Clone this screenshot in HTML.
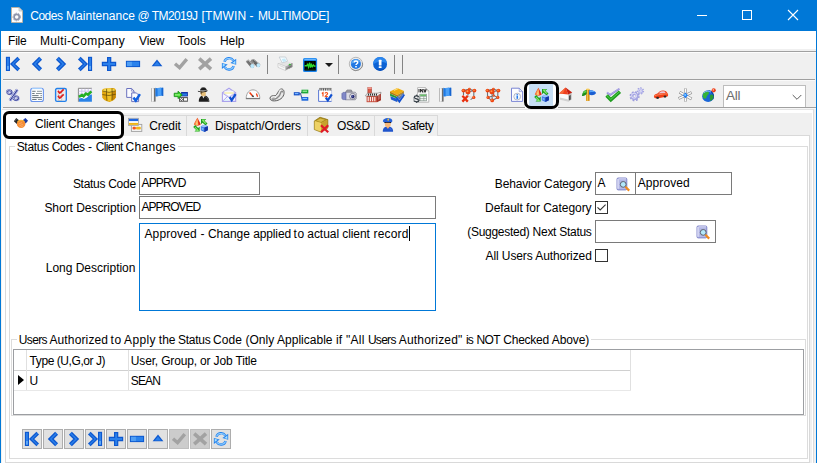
<!DOCTYPE html>
<html><head><meta charset="utf-8"><title>Codes Maintenance</title>
<style>
html,body{margin:0;padding:0;background:#f0f0f0;}
body{width:817px;height:463px;overflow:hidden;font-family:"Liberation Sans",sans-serif;}
#win{position:relative;width:817px;height:463px;overflow:hidden;background:#f0f0f0;}
#win div,#win span{position:absolute;box-sizing:border-box;}
#win svg{display:block;}
.t{white-space:pre;font-size:12px;}
.ic{width:16px;height:16px;}
.ic svg,.nb svg{display:block;width:16px;height:16px;overflow:visible;}
.sep{top:55px;width:1px;height:19px;background:#848484;}
.inp{background:#fff;border:1px solid #7a7a7a;}
.cb{width:13px;height:13px;background:#fff;border:1px solid #333;}
.tab{top:115px;height:21px;background:#f0f0f0;border:1px solid #d9d9d9;border-bottom:none;}
.nb{top:429px;width:20px;height:20px;background:#e1e1e1;border:1px solid #adadad;}
.nb svg{position:absolute;left:1px;top:1px;}
.nbd{background:#cccccc;border-color:#bfbfbf;}
.gl{background:#dcdcdc;}
</style></head>
<body>
<div id="win">
<!-- window chrome -->
<div style="left:0;top:0;width:817px;height:31px;background:#0078d7"></div>
<div style="left:0;top:0;width:1px;height:463px;background:#0078d7"></div>
<div style="left:816px;top:0;width:1px;height:463px;background:#0078d7"></div>
<!-- app icon -->
<div style="left:11px;top:7px;width:12px;height:16px"><svg width="12" height="16" viewBox="0 0 12 16"><path d="M0.5 0.5H8L11.5 4V15.5H0.5Z" fill="#fdfdfd" stroke="#b9b3a8" stroke-width="1"/><path d="M8 0.5V4H11.5Z" fill="#dfe6f2" stroke="#b9b3a8" stroke-width=".6"/><circle cx="5.7" cy="10" r="2.6" fill="none" stroke="#8e94aa" stroke-width="1.7"/><circle cx="5.7" cy="10" r="3.8" fill="none" stroke="#9aa0b4" stroke-width="1" stroke-dasharray="1.5 1.2"/></svg></div>
<!-- caption buttons -->
<div style="left:697px;top:15px;width:10px;height:1px;background:#fff"></div>
<div style="left:742px;top:10px;width:10px;height:10px;border:1px solid #fff"></div>
<div style="left:787px;top:9px;width:12px;height:12px"><svg width="12" height="12" viewBox="0 0 12 12"><path d="M1 1L11 11M11 1L1 11" stroke="#fff" stroke-width="1.1" fill="none"/></svg></div>
<!-- menu bar -->
<div style="left:1px;top:31px;width:815px;height:18px;background:#fff"></div>
<div style="left:1px;top:51px;width:815px;height:1px;background:#a0a0a0"></div>
<div style="left:1px;top:52px;width:815px;height:1px;background:#fcfcfc"></div>
<!-- toolbar 1 -->
<div style="left:3px;top:79px;width:812px;height:1px;background:#a0a0a0"></div>
<div style="left:3px;top:80px;width:812px;height:1px;background:#fafafa"></div>
<div class="ic" style="left:5px;top:56px"><svg viewBox="0 0 16 16" ><rect x="0.9" y="0.8" width="4.1" height="14.2" fill="#0e58cf"/><rect x="2.0" y="1.9" width="1.9" height="12" fill="#2b80ea"/><rect x="2.2" y="10" width="1.5" height="3.6" fill="#6db4fa"/><path d="M13.7 2.2 L7.7 8 L13.7 13.8" fill="none" stroke="#0e58cf" stroke-width="3.8"/><path d="M13.7 2.2 L7.7 8 L13.7 13.8" fill="none" stroke="#2b80ea" stroke-width="1.1"/></svg></div>
<div class="ic" style="left:29px;top:56px"><svg viewBox="0 0 16 16" ><path d="M11.6 2.3 L5.8 8 L11.6 13.7" fill="none" stroke="#0e58cf" stroke-width="4.2"/><path d="M11.6 2.3 L5.8 8 L11.6 13.7" fill="none" stroke="#2b80ea" stroke-width="1.5"/></svg></div>
<div class="ic" style="left:53px;top:56px"><svg viewBox="0 0 16 16" ><path d="M4.4 2.3 L10.2 8 L4.4 13.7" fill="none" stroke="#0e58cf" stroke-width="4.2"/><path d="M4.4 2.3 L10.2 8 L4.4 13.7" fill="none" stroke="#2b80ea" stroke-width="1.5"/></svg></div>
<div class="ic" style="left:77px;top:56px"><svg viewBox="0 0 16 16" ><rect x="11" y="0.8" width="4.1" height="14.2" fill="#0e58cf"/><rect x="12.1" y="1.9" width="1.9" height="12" fill="#2b80ea"/><rect x="12.3" y="10" width="1.5" height="3.6" fill="#6db4fa"/><path d="M2.3 2.2 L8.3 8 L2.3 13.8" fill="none" stroke="#0e58cf" stroke-width="3.8"/><path d="M2.3 2.2 L8.3 8 L2.3 13.8" fill="none" stroke="#2b80ea" stroke-width="1.1"/></svg></div>
<div class="ic" style="left:101px;top:56px"><svg viewBox="0 0 16 16" ><path d="M6 1H10.3V5.7H15.2V10.2H10.3V15.1H6V10.2H0.8V5.7H6Z" fill="#0e58cf"/><path d="M7.2 2.2H9.1V6.9H14V9H9.1V13.9H7.2V9H2V6.9H7.2Z" fill="#2b80ea"/></svg></div>
<div class="ic" style="left:125px;top:56px"><svg viewBox="0 0 16 16" ><rect x="0.9" y="4.8" width="14.2" height="6.3" fill="#0e58cf"/><rect x="1.9" y="5.8" width="12.2" height="4.3" fill="#2a82ec"/><rect x="1.9" y="5.8" width="5" height="4.3" fill="#4f9ef4"/></svg></div>
<div class="ic" style="left:149px;top:56px"><svg viewBox="0 0 16 16" ><path d="M8 3.6L13.4 10.3H2.6Z" fill="#0e58cf"/><path d="M8 5.6L11.2 9.4H4.8Z" fill="#2b80ea"/></svg></div>
<div class="ic" style="left:173px;top:56px"><svg viewBox="0 0 16 16" ><path d="M2 7.7L6.6 11.7L13.8 3.2" fill="none" stroke="#a2a2a2" stroke-width="3.4"/></svg></div>
<div class="ic" style="left:197px;top:56px"><svg viewBox="0 0 16 16" ><path d="M2.2 2.6L14 13.1M14 2.6L2.2 13.1" fill="none" stroke="#a2a2a2" stroke-width="3.6"/></svg></div>
<div class="ic" style="left:221px;top:56px"><svg viewBox="0 0 16 16" ><path d="M3.5 5.8C4.4 1.6 10 .8 12.4 4.6" fill="none" stroke="#2482ee" stroke-width="2.4"/><path d="M3.6 5.4C4.6 2 9.8 1.4 12.2 4.4" fill="none" stroke="#92d0ff" stroke-width="1.1"/><path d="M9.4 7.1L15.2 2.7V8.7Z" fill="#2482ee"/><path d="M11.4 6.9L14.4 4.6V7.9Z" fill="#a6e0ff"/><g transform="rotate(180 8.05 7.85)"><path d="M3.5 5.8C4.4 1.6 10 .8 12.4 4.6" fill="none" stroke="#2482ee" stroke-width="2.4"/><path d="M3.6 5.4C4.6 2 9.8 1.4 12.2 4.4" fill="none" stroke="#92d0ff" stroke-width="1.1"/><path d="M9.4 7.1L15.2 2.7V8.7Z" fill="#2482ee"/><path d="M11.4 6.9L14.4 4.6V7.9Z" fill="#a6e0ff"/></g></svg></div>
<div class="ic" style="left:245px;top:56px"><svg viewBox="0 0 16 16" ><path d="M.8 5.6L3.2 3.6L9.4 9.4L8.6 11.8L5.8 11.4Z" fill="#727272"/><path d="M5.6 4.2L8.6 2.9L15.2 8.2L14.9 10.8L12 11Z" fill="#646464"/><path d="M4.6 5.4L7 4.4L9.6 6.8L7.6 7.8Z" fill="#8a8a8a"/><path d="M1.4 5.4L3.2 4.2L7.6 8.2M6.4 4.2L8.6 3.5L13.6 7.4" stroke="#b4b4b4" stroke-width="1" fill="none"/><ellipse cx="7.3" cy="10" rx="1.9" ry="2.1" fill="#bce8fc" transform="rotate(-30 7.5 10.1)"/><ellipse cx="13.4" cy="9.2" rx="1.8" ry="2.1" fill="#bce8fc" transform="rotate(-30 13.5 9.3)"/></svg></div>
<div class="sep" style="left:267px"></div>
<div class="sep" style="left:338px"></div>
<div class="sep" style="left:394px"></div>
<div class="sep" style="left:402px"></div>
<div class="ic" style="left:277px;top:56px"><svg viewBox="0 0 16 16" ><path d="M1 7.4L7.4 4.4L15.4 7L8.6 10.4Z" fill="#e4e4e4"/><path d="M1 7.4L8.6 10.4V14.6L1 11.4Z" fill="#f7f7f7" stroke="#b4b4b4" stroke-width=".5"/><path d="M8.6 10.4L15.4 7V11L8.6 14.6Z" fill="#a8a8a8"/><path d="M11.6 8.9L15.4 7V11L11.6 13Z" fill="#8c8c8c"/><path d="M2.2 1H8.6L10.6 5.2L5.2 6.8Z" fill="#f6fcff" stroke="#b4bcc4" stroke-width=".6"/><path d="M4.8 3L8 2.6L9.4 5L6 6Z" fill="#c4eaf8"/><path d="M2.4 9.4L7.4 11.6" stroke="#d0d0d0" stroke-width=".8"/><path d="M9.6 12.6L14.6 10" stroke="#6e6e6e" stroke-width=".9"/><ellipse cx="12.8" cy="8.5" rx="1.1" ry=".7" fill="#2ec42e"/></svg></div>
<div class="ic" style="left:302px;top:56px"><svg viewBox="0 0 16 16" ><rect x="1" y="2" width="14.1" height="14.1" rx="1.6" fill="#1c86f0"/><rect x="2.4" y="2.8" width="11.4" height="1" fill="#7cc0ff"/><rect x="2.4" y="5" width="11.4" height="9.6" fill="#000"/><path d="M2.6 13.6H13.6M5 5.2V14.4M11 5.2V14.4" stroke="#0c3a0c" stroke-width=".6"/><path d="M2.6 9.8H4.6L5.6 8.4L6.6 11L7.6 6.6L8.6 11.6L9.4 8.6L10.4 10.6L11.4 9L12.4 10.2L13.6 9.8" fill="none" stroke="#2edc2e" stroke-width="1.4"/></svg></div>
<div style="position:absolute;left:324.5px;top:63px;width:0;height:0;border-left:4px solid transparent;border-right:4px solid transparent;border-top:4.5px solid #1a1a1a"></div>
<div class="ic" style="left:348px;top:56px"><svg viewBox="0 0 16 16" ><circle cx="7.9" cy="7.9" r="6.6" fill="#ececec" stroke="#a8a8a8" stroke-width=".8"/><path d="M3.4 12.8A6.6 6.6 0 0 0 14.4 6.6" fill="none" stroke="#7e7e7e" stroke-width=".8"/><circle cx="7.9" cy="7.9" r="5" fill="#2278e2"/><path d="M7.9 3.3A4.6 4.6 0 0 0 3.4 8.6C5 6 9 4.6 12.2 6.2A4.6 4.6 0 0 0 7.9 3.3Z" fill="#5aaaf6"/><path d="M6.2 6.6C6.2 4.6 9.7 4.6 9.7 6.5C9.7 7.7 8 7.8 8 9.1" fill="none" stroke="#fff" stroke-width="1.5"/><rect x="7.2" y="10" width="1.6" height="1.4" fill="#fff"/></svg></div>
<div class="ic" style="left:372px;top:56px"><svg viewBox="0 0 16 16" ><circle cx="8.1" cy="7.9" r="7" fill="#0c62d4"/><path d="M8.1 .9A7 7 0 0 0 1.2 8.6C4 5 12 4.6 15 8A7 7 0 0 0 8.1 .9Z" fill="#2a86ee"/><path d="M2.6 12A7 7 0 0 0 13.6 12C10 14 6 14 2.6 12Z" fill="#0848b0"/><rect x="6.8" y="3.8" width="2.7" height="5.6" rx=".5" fill="#fff"/><rect x="6.7" y="10.2" width="2.9" height="1.8" rx=".5" fill="#fff"/></svg></div>
<!-- toolbar 2 -->
<div style="left:3px;top:107px;width:813px;height:1px;background:#a0a0a0"></div>
<div style="left:1px;top:108px;width:815px;height:1px;background:#f7f7f7"></div>
<div style="left:525px;top:82px;width:33px;height:26px;background:#fff"></div>
<div style="left:529px;top:84px;width:24px;height:22px;background:#c7dff5"></div>
<div class="ic" style="left:5px;top:87px"><svg viewBox="0 0 16 16" ><g stroke="#a6aee6" fill="none" transform="translate(.8,.6)"><ellipse cx="4.2" cy="5" rx="2.2" ry="1.8" stroke-width="1.8"/><ellipse cx="10.7" cy="10.9" rx="2.3" ry="1.9" stroke-width="1.8"/><path d="M12 2.4L4.6 13.2" stroke-width="2.2"/></g><g stroke="#363e90" fill="none"><ellipse cx="4.2" cy="5" rx="2.2" ry="1.8" stroke-width="1.7"/><ellipse cx="10.7" cy="10.9" rx="2.3" ry="1.9" stroke-width="1.7"/><path d="M12 2.4L4.6 13.2" stroke-width="2"/></g><g stroke="#ccd2f8" fill="none" transform="translate(-.3,-.3)"><ellipse cx="4.2" cy="5" rx="2.2" ry="1.8" stroke-width=".8"/><ellipse cx="10.7" cy="10.9" rx="2.3" ry="1.9" stroke-width=".8"/><path d="M12 2.4L4.6 13.2" stroke-width="1"/></g></svg></div>
<div class="ic" style="left:29px;top:87px"><svg viewBox="0 0 16 16" ><rect x="1.7" y="1.4" width="12.7" height="13.1" rx="2" fill="#fcfeff" stroke="#6a94ea" stroke-width="1.1"/><path d="M3 1.6H13" stroke="#a8d4ff" stroke-width="1"/><path d="M3.2 4.3H6.6M3.2 6.5H5.6M3.2 8.6H9.6M3.2 10.6H13M3.2 12.5H7.6" stroke="#6c7880" stroke-width="1"/><path d="M8 4.3H13M7 6.5H13M11.4 8.6H13M9 12.5H13" stroke="#8c969c" stroke-width="1"/></svg></div>
<div class="ic" style="left:53px;top:87px"><svg viewBox="0 0 16 16" ><rect x="2.6" y="1.5" width="10.7" height="12.9" rx="1.4" fill="#ececee" stroke="#2280ea" stroke-width="1.4"/><rect x="5.2" y="5.6" width="3.6" height="2.6" fill="#fff" stroke="#a8a8a8" stroke-width=".6"/><rect x="5.2" y="10.6" width="3.6" height="2.6" fill="#fff" stroke="#a8a8a8" stroke-width=".6"/><path d="M4.9 3.9L6.8 6L10.7 2.4M4.9 8.9L6.8 11L10.7 7.4" fill="none" stroke="#e01a1a" stroke-width="1.6"/></svg></div>
<div class="ic" style="left:77px;top:87px"><svg viewBox="0 0 16 16" ><rect x="1.4" y="1.3" width="13.5" height="13.5" fill="#fbfbff"/><path d="M1.4 14.8V1.3H14.9" fill="none" stroke="#8a8a8a" stroke-width="1"/><path d="M4.8 1.6V9M8 1.6V9M11.2 1.6V9M14.4 1.6V6M1.6 4.2H14.8M1.6 7H14.8" stroke="#c4bce8" stroke-width=".8"/><path d="M1.9 11.6L5 11L7 12L10 10.4L12.6 8L14.9 7.6V14.8H1.9Z" fill="#2a82e6"/><path d="M1.9 9.8L5 8L6.6 9.2L9 6.6L11 7.6L14.4 4.4" fill="none" stroke="#24b024" stroke-width="2.6"/></svg></div>
<div class="ic" style="left:101px;top:87px"><svg viewBox="0 0 16 16" ><path d="M1 4Q1 1.8 4 1.5L12 1.1Q15 1.5 15 4L14.7 10.4Q14 13 8.6 14.9Q2.6 13.6 1.3 10.4Z" fill="#e4a80e"/><path d="M1.2 3.6Q4 1.2 8 1.6Q12 1 14.8 3.4Q12 5.6 8 5.4Q4 5.8 1.2 3.6Z" fill="#f6d648"/><path d="M6 5.6Q8.4 5 10.8 5.6V13.4Q8.4 14.6 6 13.6Z" fill="#f0c024"/><path d="M11 5.6L14.9 3.6L14.7 10.4Q13.6 12.4 11 13.6Z" fill="#c68808"/><path d="M5.6 1.8Q5.2 8 6 13.8M11 1.4Q11.4 8 10.9 13.4M1.3 7.6Q8 9.6 14.8 7.2M1.6 4Q8 6.8 14.6 3.8" fill="none" stroke="#5e4606" stroke-width=".7"/></svg></div>
<div class="ic" style="left:125px;top:87px"><svg viewBox="0 0 16 16" ><path d="M1.7 1.5H6.6L9 3.9V10.4H1.7Z" fill="#fbfcff" stroke="#6a72be" stroke-width="1"/><path d="M6.4 1.5V4.1H9" fill="none" stroke="#6a72be" stroke-width=".7"/><path d="M6.7 5.9H11.4L13.6 8.1V14.6H6.7Z" fill="#fbfcff" stroke="#6a72be" stroke-width="1"/><path d="M8.4 10.6L10.8 13.6L14.9 7.1" fill="none" stroke="#1060e0" stroke-width="2.5"/></svg></div>
<div class="ic" style="left:149px;top:87px"><svg viewBox="0 0 16 16" ><rect x="2.4" y="1.2" width="4.2" height="13.4" fill="#6e6e6e"/><rect x="2.6" y="1.2" width="2.4" height="13.4" fill="#e2e2e2"/><rect x="3.2" y="1.2" width=".9" height="13.4" fill="#fafafa"/><path d="M6.4 .8C8.6 1.8 11 .2 14.2 .8V9C11 8.2 8.6 10 6.4 9.2Z" fill="#1f7ae4"/><path d="M8.6 1C10 .8 11 .6 12.2 .6V8.6C11 8.6 10 8.8 8.6 9.2Z" fill="#4aa0f8"/><path d="M13.2 .7L14.2 .8V9L13.2 8.8Z" fill="#1460c8"/></svg></div>
<div class="ic" style="left:173px;top:87px"><svg viewBox="0 0 16 16" ><rect x="8.1" y="5" width="6.8" height="4.4" fill="#1434a8"/><rect x="9" y="6.4" width="5" height="2.2" fill="#2a7ce4"/><rect x="6" y="10" width="8.9" height="4.8" fill="#5e5e5e"/><rect x="11" y="11.2" width="3" height="2.4" fill="#fff"/><path d="M7.2 11.2L9.8 13.6M9.8 11.2L7.2 13.6" stroke="#fff" stroke-width="1"/><path d="M1.2 6.2H5V4.2L9.3 7.9L5 11.6V9.6H1.2Z" fill="#34d424" stroke="#148a14" stroke-width=".8"/><path d="M2 7.9H7" stroke="#a0f488" stroke-width="1.2"/></svg></div>
<div class="ic" style="left:197px;top:87px"><svg viewBox="0 0 16 16" ><path d="M1.8 14.8C1.6 11 3.4 8.6 6.4 8.2C10 8.2 12.4 11 12.4 14.8Z" fill="#1e1e1e"/><path d="M8 9.4C10 10 11.4 12 11.6 14" fill="none" stroke="#5a5a5a" stroke-width=".8"/><path d="M3.8 4.6H8.8V7.4C8.8 9 7.4 9.4 6.4 9.4C5 9.4 3.8 8.6 3.8 7Z" fill="#e8c07a"/><path d="M3.6 4.6H4.8V7.6L3.6 7Z" fill="#7a5a2a"/><path d="M5.4 9.2L6.4 11.6L7.6 9Z" fill="#f4f4f4"/><path d="M3 3.6C3 -.6 9.8 -.6 9.8 3.6Z" fill="#1c1c1c"/><path d="M.9 3.8C3 4.8 8 4.8 10.4 3.2L10.6 4C8 5.8 3 5.8 .9 4.6Z" fill="#141414"/><path d="M4 1.4C5 .4 7.4 .2 8.6 1.2" stroke="#5a5a5a" stroke-width=".7" fill="none"/></svg></div>
<div class="ic" style="left:221px;top:87px"><svg viewBox="0 0 16 16" ><path d="M1.4 5.8L8 1.2L14.7 5.8V14.4H1.4Z" fill="#f6f6ff" stroke="#aaa2ec" stroke-width="1.1"/><path d="M3.2 6.4V3.8H12.8V6.4L8 9.6Z" fill="#fff" stroke="#c0bce0" stroke-width=".5"/><path d="M3.4 6H12.6" stroke="#f4ec9a" stroke-width="1.2"/><path d="M1.4 6L8 10.6L14.7 6M1.6 14.2L6.4 9.6" fill="none" stroke="#aaa2ec" stroke-width=".9"/><path d="M2.4 13.6L7 11.6V14Z" fill="#d8f0fa"/><path d="M8.7 10.2L10.7 13.2L14.6 7.2" fill="none" stroke="#1050d0" stroke-width="2.3"/></svg></div>
<div class="ic" style="left:245px;top:87px"><svg viewBox="0 0 16 16" ><path d="M1.2 11.4C1.2 0 14.8 0 14.8 11.4Z" fill="#fdfdfd" stroke="#a2a2a2" stroke-width="1"/><path d="M.9 11.7H15" stroke="#6e6e6e" stroke-width="1"/><path d="M4.6 5.4L7.4 8.8" stroke="#f03a10" stroke-width="1.5"/><path d="M7.2 8.6L8.6 9.8" stroke="#2a2a2a" stroke-width="1.5"/><path d="M11.4 6.6L12.6 9.8" stroke="#f03a10" stroke-width="1.3"/></svg></div>
<div class="ic" style="left:269px;top:87px"><svg viewBox="0 0 16 16" ><path d="M1 11.2C1 9 3.8 8.4 6.2 8.8C8.6 7.6 9 3.2 11.8 2C14.8 1.6 15.6 4.6 14.8 7.6C13.6 12 8.4 14.4 3.8 13.8C1.8 13.4 1 12.4 1 11.2Z" fill="#e8e8e8" stroke="#5a5a5a" stroke-width="1"/><path d="M2.4 12C5.6 13 10.6 11 12 5C12.4 3.6 13.8 3.8 13.8 5.4" fill="none" stroke="#8a8a8a" stroke-width="1.3"/><path d="M2.6 10.4C4 9.6 6 9.8 7 10.4" fill="none" stroke="#fff" stroke-width="1"/><ellipse cx="4.6" cy="11.4" rx="1.8" ry=".9" fill="#a8a8a8"/><path d="M10 4.4C10.8 3 12 2.8 12.6 3" stroke="#fff" stroke-width=".9" fill="none"/></svg></div>
<div class="ic" style="left:293px;top:87px"><svg viewBox="0 0 16 16" ><path d="M5.6 6.8H7.6M7.6 6.8L9 4.6M7.6 6.8L9 11.8" stroke="#3a4a9a" stroke-width="1" fill="none"/><rect x=".8" y="5.2" width="5.9" height="3.2" fill="#1650c8"/><rect x="1.8" y="6" width="3.6" height="1.2" fill="#7ab8ff"/><rect x="8.5" y="2.7" width="6.8" height="3.7" fill="#1fa838"/><rect x="9.6" y="3.6" width="4.4" height="1.2" fill="#a0f0a0"/><rect x="8.5" y="10" width="6.8" height="3.7" fill="#1a64dc"/><rect x="9.6" y="10.9" width="4.4" height="1.2" fill="#8ac4ff"/></svg></div>
<div class="ic" style="left:317px;top:87px"><svg viewBox="0 0 16 16" ><path d="M1.6 3H14.6V14.4H1.6Z" fill="#fff"/><path d="M1.6 2.8V14.4H14.6" fill="none" stroke="#5a78d4" stroke-width="1"/><path d="M14.6 3V14.4" stroke="#b8c0e0" stroke-width=".8"/><path d="M3 1.2V3.6M4.8 1.2V3.6M6.6 1.2V3.6M8.4 1.2V3.6M10.2 1.2V3.6M12 1.2V3.6M13.8 1.2V3.6" stroke="#3a3a3a" stroke-width=".9"/><path d="M2.4 1.4H14.4" stroke="#6a6a6a" stroke-width=".6"/><path d="M4.8 6.4L6 5.6V9.6M8.2 6.4C8.2 5.2 10.6 5.2 10.6 6.6C10.6 7.6 8.4 8.6 8.2 9.6H10.8" fill="none" stroke="#f4501a" stroke-width="1.2"/><path d="M8.8 10.6L10.8 13.4L14.8 7.4" fill="none" stroke="#1050d0" stroke-width="2.2"/></svg></div>
<div class="ic" style="left:341px;top:87px"><svg viewBox="0 0 16 16" ><path d="M4.6 5.4L6 3H10.4L11.4 5.4Z" fill="#a4a4ac" stroke="#6a6a74" stroke-width=".6"/><path d="M4.4 5.2H14.2L15.2 6.2V11.8L14.2 12.8H4.4Z" fill="#dcdce4" stroke="#7a7a88" stroke-width=".7"/><path d="M.9 6.6L2 5.4H5V12.6H2L.9 11.6Z" fill="#8088c8" stroke="#5a62a0" stroke-width=".6"/><circle cx="11.6" cy="9.4" r="3" fill="#eeeef4" stroke="#6a6a7a" stroke-width=".8"/><circle cx="11.8" cy="9.6" r="1.8" fill="#262870"/><circle cx="11.2" cy="9" r=".6" fill="#9ab8ff"/></svg></div>
<div class="ic" style="left:365px;top:87px"><svg viewBox="0 0 16 16" ><rect x="2.9" y=".4" width="3.5" height="7" fill="#dc5a48" stroke="#9a3024" stroke-width=".6"/><rect x="2.7" y=".3" width="3.9" height="1.5" fill="#f6a69c"/><path d="M12 6.4L16 5.6V13.2L12 15.2Z" fill="#a03024"/><path d="M1.6 9H12V15.2H1.6Z" fill="#c64c3c"/><path d="M.4 8.8L2.4 6.2H12.4L16 5.2V6.6L12.2 9H.4Z" fill="#f6f6f6" stroke="#6a6a6a" stroke-width=".5"/><path d="M3.4 6.6V8.6M5.4 6.6V8.6M7.4 6.6V8.6M9.4 6.6V8.6M11.4 6.6V8.6" stroke="#1a1a1a" stroke-width="1"/><path d="M3.2 10V14.2M5.4 10V14.2M7.6 10V14.2M9.8 10V14.2" stroke="#fbeae6" stroke-width="1.2"/><path d="M13.4 8V12.8M14.8 7.4V12.2" stroke="#d88a80" stroke-width=".7"/></svg></div>
<div class="ic" style="left:389px;top:87px"><svg viewBox="0 0 16 16" ><path d="M1 4.6L8.2 1L15 4L8 8Z" fill="#f0ae10"/><path d="M5 3.4L9 1.6" stroke="#fff0b0" stroke-width=".8"/><path d="M1 4.6L8 8V9.6L1 6.4Z" fill="#b87a08"/><path d="M8 8L15 4V5.6L8 9.6Z" fill="#c88c0c"/><path d="M1 6.6L8 9.8V11.6L1.2 9Z" fill="#22983a"/><path d="M8 9.8L15 5.8V7.4L8 11.6Z" fill="#a8aca0"/><path d="M1.4 9.2L8 11.8V15L2 12.6Z" fill="#1f5cd0"/><path d="M8 11.8L14.6 7.8V10.6L8 15Z" fill="#8e929e"/><path d="M8 9.8L15 5.8M8 11.8L14.6 7.8" stroke="#4a4a4a" stroke-width=".6"/><path d="M7.8 10.2L10.4 14L15 7.4" fill="none" stroke="#1050d0" stroke-width="2.5"/><path d="M8.4 10L10.4 13L14.4 7.2" fill="none" stroke="#fff" stroke-width=".5" opacity=".6"/></svg></div>
<div class="ic" style="left:413px;top:87px"><svg viewBox="0 0 16 16" ><path d="M4.6 .6H12.4L15.8 4V15.2H4.6Z" fill="#fff" stroke="#a8a8a8" stroke-width=".8"/><path d="M12.4 .6V4H15.8Z" fill="#e4e4e4" stroke="#a8a8a8" stroke-width=".5"/><path d="M6 2V5.4M7.6 5.4V2L9.8 5.4V2M10.8 2L12 5.4L13.2 2" fill="none" stroke="#1e1e1e" stroke-width="1"/><rect x="6.8" y="7.2" width="6.6" height="6.6" fill="#f4faf4" stroke="#7a8a84" stroke-width=".7"/><rect x="7.2" y="7.5" width="5.8" height="1.6" fill="#6ac06a"/><path d="M6.8 9.4H13.4M6.8 11.6H13.4M10.8 9.4V13.8" stroke="#7a8a84" stroke-width=".6"/><path d="M5.8 9.8C5 8.6 1.3 8.4 1.3 10.3C1.3 12.1 5.9 11.5 5.9 13.5C5.9 15.3 2 15.1 .9 13.9" fill="none" stroke="#323c44" stroke-width="1.2"/><path d="M3.6 7.6V9M3.6 14.6V16" stroke="#323c44" stroke-width=".9"/><path d="M0 11H2M5 11H7.4M0 13H2.4M5.4 13H7.4" stroke="#59636b" stroke-width=".7"/></svg></div>
<div class="ic" style="left:437px;top:87px"><svg viewBox="0 0 16 16" ><rect x="2.4" y="1.2" width="4.2" height="13.4" fill="#6e6e6e"/><rect x="2.6" y="1.2" width="2.4" height="13.4" fill="#e2e2e2"/><rect x="3.2" y="1.2" width=".9" height="13.4" fill="#fafafa"/><path d="M6.4 .8C8.6 1.8 11 .2 14.2 .8V9C11 8.2 8.6 10 6.4 9.2Z" fill="#1f7ae4"/><path d="M8.6 1C10 .8 11 .6 12.2 .6V8.6C11 8.6 10 8.8 8.6 9.2Z" fill="#4aa0f8"/><path d="M13.2 .7L14.2 .8V9L13.2 8.8Z" fill="#1460c8"/></svg></div>
<div class="ic" style="left:461px;top:87px"><svg viewBox="0 0 16 16" ><path d="M2.5 3.6V8M12.8 10.4V3.6L8.4 2.1L2.5 3.6L7 4.8L13.4 3.6M7 4.8V8.4M12.8 10.4L9.6 12.6" fill="none" stroke="#6c727a" stroke-width="1.1"/><path d="M7.6 9.6L12.4 10.6" stroke="#e8a080" stroke-width=".8" stroke-dasharray="1 1"/><circle cx="8.4" cy="2.1" r="1.38" fill="#ee4210"/><circle cx="8.10" cy="1.80" r="0.54" fill="#ff9a4a"/><circle cx="2.5" cy="3.6" r="1.95" fill="#ee4210"/><circle cx="2.08" cy="3.18" r="0.77" fill="#ff9a4a"/><circle cx="13.4" cy="3.6" r="1.95" fill="#ee4210"/><circle cx="12.97" cy="3.18" r="0.77" fill="#ff9a4a"/><circle cx="12.8" cy="10.4" r="1.61" fill="#ee4210"/><circle cx="12.45" cy="10.05" r="0.63" fill="#ff9a4a"/><circle cx="7" cy="4.8" r="2.53" fill="#ee4210"/><circle cx="6.45" cy="4.25" r="0.99" fill="#ff9a4a"/><path d="M1.4 8.8L6.8 14.6M6.8 8.8L1.4 14.6" stroke="#e8300e" stroke-width="2.3"/></svg></div>
<div class="ic" style="left:485px;top:87px"><svg viewBox="0 0 16 16" ><path d="M2.5 3.6V10.4L7.2 13.6L12.8 10.4V3.6L8.4 2.1L2.5 3.6L7 4.8L13.4 3.6M7 4.8L7.2 13.6M3.1 10.4L8.7 8.6L12.8 10.4M8.4 2.1L8.7 8.6" fill="none" stroke="#6c727a" stroke-width="1.1"/><circle cx="8.4" cy="2.1" r="1.38" fill="#ee4210"/><circle cx="8.10" cy="1.80" r="0.54" fill="#ff9a4a"/><circle cx="2.5" cy="3.6" r="1.95" fill="#ee4210"/><circle cx="2.08" cy="3.18" r="0.77" fill="#ff9a4a"/><circle cx="13.4" cy="3.6" r="1.95" fill="#ee4210"/><circle cx="12.97" cy="3.18" r="0.77" fill="#ff9a4a"/><circle cx="8.7" cy="8.6" r="1.15" fill="#ee4210"/><circle cx="8.45" cy="8.35" r="0.45" fill="#ff9a4a"/><circle cx="3.1" cy="10.4" r="1.61" fill="#ee4210"/><circle cx="2.75" cy="10.05" r="0.63" fill="#ff9a4a"/><circle cx="12.8" cy="10.4" r="1.61" fill="#ee4210"/><circle cx="12.45" cy="10.05" r="0.63" fill="#ff9a4a"/><circle cx="7.2" cy="13.4" r="1.84" fill="#ee4210"/><circle cx="6.80" cy="13.00" r="0.72" fill="#ff9a4a"/><circle cx="7" cy="4.8" r="2.53" fill="#ee4210"/><circle cx="6.45" cy="4.25" r="0.99" fill="#ff9a4a"/></svg></div>
<div class="ic" style="left:509px;top:87px"><svg viewBox="0 0 16 16" ><path d="M2.5 1.2H10.2L13.6 4.6V14.4H2.5Z" fill="#fdfdff" stroke="#7a86d4" stroke-width="1"/><path d="M10.2 1.2V4.6H13.6Z" fill="#e6ecfc" stroke="#7a86d4" stroke-width=".6"/><circle cx="8.2" cy="9.6" r="3.4" fill="#eef6ff" stroke="#a8a8b8" stroke-width=".8"/><rect x="7.5" y="9" width="1.5" height="2.8" fill="#2a7ae8"/><rect x="7.5" y="7.2" width="1.5" height="1.3" fill="#2a7ae8"/></svg></div>
<div class="ic" style="left:533px;top:87px"><svg viewBox="0 0 16 16" ><path d="M5.4 .8L8.8 7.3C7.6 9 3.2 9 1.9 7.3Z" fill="#e62c14"/><path d="M5.4 .8L6.6 8.4C5 8.7 3 8.4 1.9 7.3Z" fill="#f88a4a"/><path d="M5.3 2L5.8 8L3.8 7.6Z" fill="#ffd27a"/><path d="M9 2.1H14.2L12.6 3.7L15.5 6.6L13.5 8.6L10.6 5.7L9 7.3Z" fill="#1fa01f"/><path d="M10 3.1H12L11.2 3.9L13.8 6.5" fill="none" stroke="#86e86e" stroke-width="1.1"/><path d="M7.7 14.6H2.5L4.1 13L1.2 10.1L3.2 8.1L6.1 11L7.7 9.4Z" fill="#1fa01f"/><path d="M6.7 13.6H4.7L5.5 12.8L2.9 10.2" fill="none" stroke="#86e86e" stroke-width="1.1"/><path d="M8.8 9.2L12.4 7.8L15.9 9.2V13.2L12.4 14.9L8.8 13.2Z" fill="#3a7ae6"/><path d="M8.8 9.2L12.4 10.6L15.9 9.2L12.4 7.8Z" fill="#9cc4fa"/><path d="M12.4 10.6V14.9L15.9 13.2V9.2Z" fill="#1434a4"/><path d="M9.6 10.4L11.6 11.2V13.6L9.6 12.8Z" fill="#7ab2f8"/></svg></div>
<div class="ic" style="left:557px;top:87px"><svg viewBox="0 0 16 16" ><path d="M3 6.4L11.2 7.4V14.7L3 12.8Z" fill="#fafafa"/><path d="M11.2 7.4L14.6 5.6V12.6L11.2 14.7Z" fill="#bebebe"/><path d="M3 10.6L11.2 12.4V14.7L3 12.8Z" fill="#d2d2d2"/><path d="M2 6.4L8.6 .6L11.2 7.6Z" fill="#f0401e"/><path d="M8.6 .6L15.2 5.5L11.2 7.6Z" fill="#c81e0e"/><path d="M2 6.4L8.6 .6L6 6.6Z" fill="#f86a3a"/><path d="M12.2 8.8L13.6 8V12.4L12.2 13.2Z" fill="#303030"/></svg></div>
<div class="ic" style="left:581px;top:87px"><svg viewBox="0 0 16 16" ><rect x="5" y="2.2" width="3.6" height="11.7" fill="#d88e14"/><rect x="5.7" y="2.2" width="1.2" height="11.7" fill="#f2c450"/><ellipse cx="6.8" cy="2.3" rx="1.8" ry=".8" fill="#f6d060"/><path d="M5.6 3C3.4 2.6 1.4 5 .9 8.8C2.8 9.4 4.6 8.4 5.8 6.6Z" fill="#1c8e1c"/><path d="M5.2 3.4C3.8 3.2 2.6 4.6 1.8 6.6C3.2 5.8 4.4 5.4 5.4 5.2Z" fill="#62d652"/><path d="M8 3.6C10.6 2.8 13.8 3.6 15.1 6C13.4 8.4 10.4 8.8 8 7.4Z" fill="#1a5ed2"/><path d="M8.4 3.8C10.6 3.2 13 3.8 14.2 5.2C12.2 4.8 10 5 8.4 5.4Z" fill="#58a6fa"/></svg></div>
<div class="ic" style="left:605px;top:87px"><svg viewBox="0 0 16 16" ><path d="M1.9 5.4L5.2 7.8L14.4 1.8" fill="none" stroke="#8e86d6" stroke-width="1.8"/><path d="M1.9 5.2L5.2 7.5L14.4 1.5" fill="none" stroke="#c6c2f2" stroke-width=".7"/><path d="M1.6 8.6L5.8 12.8L14.9 4.8" fill="none" stroke="#1f9c1f" stroke-width="3.5"/><path d="M1.7 8.4L5.8 12.4L14.8 4.6" fill="none" stroke="#52d44a" stroke-width="1"/></svg></div>
<div class="ic" style="left:629px;top:87px"><svg viewBox="0 0 16 16" ><circle cx="5.6" cy="9.2" r="4.2" fill="none" stroke="#9c9cdc" stroke-width="1.8" stroke-dasharray="1.8 1.5"/><circle cx="5.6" cy="9.2" r="2.5" fill="none" stroke="#a6a6e2" stroke-width="2.8"/><circle cx="5.1" cy="8.7" r="2.5" fill="none" stroke="#e4e4fc" stroke-width=".9"/><circle cx="11.5" cy="3.9" r="2.9" fill="none" stroke="#a4a4e0" stroke-width="1.5" stroke-dasharray="1.4 1.2"/><circle cx="11.5" cy="3.9" r="1.6" fill="none" stroke="#b0b0e8" stroke-width="2"/><circle cx="11.2" cy="3.6" r="1.6" fill="none" stroke="#e4e4fc" stroke-width=".7"/></svg></div>
<div class="ic" style="left:653px;top:87px"><svg viewBox="0 0 16 16" ><path d="M.9 9.4C.9 7.8 2.6 7 4.4 6.6L6.6 4.4C8.4 3.4 11.4 3.4 13 4.2L14.8 6.4C15.4 7.6 15.2 8.8 14.4 9.4L4 11.4C2 11.4 .9 10.6 .9 9.4Z" fill="#f03e16"/><path d="M5.4 6.6L7.4 4.8C8.8 4.2 10.8 4.2 12 4.8L12.6 6Z" fill="#e8c8d8"/><path d="M1.4 8.8C4 7.8 9 7 14.8 6.8" fill="none" stroke="#ff8a5a" stroke-width=".9"/><ellipse cx="4.6" cy="10.8" rx="1.5" ry="1.1" fill="#2a2a2a"/><ellipse cx="12" cy="9.6" rx="1.4" ry="1.1" fill="#2a2a2a"/></svg></div>
<div class="ic" style="left:677px;top:87px"><svg viewBox="0 0 16 16" ><path d="M8.4 1.4V14.6M1.6 11.6L14.6 5.4M2.6 5.2L14.6 12" stroke="#8e8e8e" stroke-width="2.8"/><path d="M8.4 1.8V14.2M2 11.4L14.2 5.6M3 5.4L14.2 11.8" stroke="#fcfcfc" stroke-width="1.6"/><path d="M8.4 5.4L11 8.3L8.4 11.2L5.8 8.3Z" fill="#1f7af0"/><circle cx="8.2" cy="8" r="1.1" fill="#7ac8ff"/></svg></div>
<div class="ic" style="left:701px;top:87px"><svg viewBox="0 0 16 16" ><circle cx="7.1" cy="9.2" r="5.9" fill="#1a66d8"/><path d="M7.1 3.3A5.9 5.9 0 0 1 11.6 13A7 7 0 0 0 7.1 3.3Z" fill="#0e3e98"/><path d="M3 5.2C5 3.6 7.4 3.8 8 5.8C8.4 7.4 6 8 5.6 10C5.2 12 3.6 12 2.4 11C1.4 9 1.6 6.8 3 5.2Z" fill="#34b23a"/><path d="M9.4 7.8C10.8 6.8 12.4 7.8 12.6 9.6C12.4 11.6 11.2 13.2 9.4 14C8.6 12.4 8.4 9.2 9.4 7.8Z" fill="#2a9a34"/><path d="M2.8 6C4.4 4 7.6 3.6 10 5" fill="none" stroke="#8ac0ff" stroke-width=".9"/><circle cx="12.7" cy="3.3" r="2.1" fill="#ee3e1a"/><circle cx="12.3" cy="2.9" r=".8" fill="#ffb49a"/></svg></div>
<!-- combo -->
<div style="left:723px;top:85px;width:83px;height:22px;background:#fff;border:1px solid #bdbdbd;border-bottom:none"></div>
<div style="left:792px;top:94px;width:10px;height:7px"><svg width="10" height="7" viewBox="0 0 10 7"><path d="M0.7 1L5 5.3L9.3 1" stroke="#5a5a5a" stroke-width="1" fill="none"/></svg></div>
<!-- highlight box toolbar -->
<div style="left:524px;top:81px;width:35px;height:28px;border:3px solid #000;border-radius:7px;background:transparent"></div>

<!-- main panel -->
<div style="left:1px;top:109px;width:813px;height:1px;background:#e3e3e3"></div>
<div style="left:813px;top:109px;width:1px;height:354px;background:#dcdcdc"></div>
<div style="left:1px;top:109px;width:1px;height:354px;background:#f4f2ee"></div>
<div style="left:2px;top:110px;width:811px;height:353px;background:#fff"></div>
<!-- tab strip bg -->
<div style="left:5px;top:113px;width:807px;height:23px;background:#f0f0f0"></div>
<div style="left:810px;top:113px;width:2px;height:350px;background:#f0f0f0"></div>
<!-- tab page -->
<div style="left:5px;top:135px;width:805px;height:328px;background:#fff;border:1px solid #d9d9d9;border-bottom:none"></div>
<div style="left:5px;top:462px;width:805px;height:1px;background:#d9d9d9"></div>
<!-- tabs -->
<div class="tab" style="left:123px;width:64px"></div>
<div class="tab" style="left:186px;width:122px"></div>
<div class="tab" style="left:307px;width:68px"></div>
<div class="tab" style="left:374px;width:64px"></div>
<!-- selected tab + highlight -->
<div style="left:3px;top:111px;width:121px;height:28px;background:#fff;border:3px solid #000;border-radius:6px"></div>
<div class="ic" style="left:13px;top:115px"><svg viewBox="0 0 16 16" ><path d="M.9 6.2L3.2 2.9L6.6 5.8L3.8 8.9Z" fill="#262626"/><path d="M2 6L3.4 4L4.6 5" stroke="#6a6a6a" stroke-width=".7" fill="none"/><path d="M15 5.8L12.4 2.9L9.4 5.6L12.6 8.6Z" fill="#1a3a9e"/><path d="M11.4 4.6L12.6 3.6L14 5.4" stroke="#4a6ad0" stroke-width=".7" fill="none"/><ellipse cx="8.1" cy="8.9" rx="4.3" ry="4" fill="#f68e34"/><path d="M4.6 7C5.8 5 9.6 4.6 11.4 6.6" fill="none" stroke="#f8b83a" stroke-width="1.1"/><path d="M5.6 9L9 7.6M6.4 10.8L10 9.2M7.6 12L10.4 10.8" stroke="#fbb27a" stroke-width=".7"/></svg></div>
<div class="ic" style="left:127px;top:117px"><svg viewBox="0 0 16 16" ><rect x="4.4" y="7.4" width="10.4" height="7" fill="#f6f6f6" stroke="#a0a0a0" stroke-width=".9"/><rect x="5.5" y="9.7" width="3.4" height="2.9" rx="1" fill="#f4541a"/><rect x="9" y="9.7" width="4.8" height="2.9" rx="1" fill="#f2b41a"/><rect x="1.5" y="1.3" width="10" height="7.1" fill="#fff" stroke="#a0a0a0" stroke-width=".8"/><rect x="1.9" y="1.8" width="9.2" height="2.3" fill="#1f66de"/><rect x="1.9" y="5.9" width="9.2" height="2" fill="#eeb414"/></svg></div>
<div class="ic" style="left:192px;top:117px"><svg viewBox="0 0 16 16" ><path d="M5.4 .8L8.8 7.3C7.6 9 3.2 9 1.9 7.3Z" fill="#e62c14"/><path d="M5.4 .8L6.6 8.4C5 8.7 3 8.4 1.9 7.3Z" fill="#f88a4a"/><path d="M5.3 2L5.8 8L3.8 7.6Z" fill="#ffd27a"/><path d="M9 2.1H14.2L12.6 3.7L15.5 6.6L13.5 8.6L10.6 5.7L9 7.3Z" fill="#1fa01f"/><path d="M10 3.1H12L11.2 3.9L13.8 6.5" fill="none" stroke="#86e86e" stroke-width="1.1"/><path d="M7.7 14.6H2.5L4.1 13L1.2 10.1L3.2 8.1L6.1 11L7.7 9.4Z" fill="#1fa01f"/><path d="M6.7 13.6H4.7L5.5 12.8L2.9 10.2" fill="none" stroke="#86e86e" stroke-width="1.1"/><path d="M8.8 9.2L12.4 7.8L15.9 9.2V13.2L12.4 14.9L8.8 13.2Z" fill="#3a7ae6"/><path d="M8.8 9.2L12.4 10.6L15.9 9.2L12.4 7.8Z" fill="#9cc4fa"/><path d="M12.4 10.6V14.9L15.9 13.2V9.2Z" fill="#1434a4"/><path d="M9.6 10.4L11.6 11.2V13.6L9.6 12.8Z" fill="#7ab2f8"/></svg></div>
<div class="ic" style="left:314px;top:117px"><svg viewBox="0 0 16 16" ><path d="M.3 4L6 .2L13.9 2.6V11L7 15.2L.3 12.6Z" fill="#dcb840"/><path d="M.3 4L6 .2L13.9 2.6L7.4 6Z" fill="#ac8e20"/><path d="M2.4 3.8L6.2 1.4L11 2.8L7 5Z" fill="#d8bc4a"/><path d="M.3 4L7.4 6V15.2L.3 12.6Z" fill="#eed264"/><path d="M7.4 6L13.9 2.6V11L7 15.2Z" fill="#c8a22c"/><path d="M.3 4L6 .2L13.9 2.6V11L7 15.2L.3 12.6Z" fill="none" stroke="#8a7018" stroke-width=".6"/><path d="M7 8.2L14.2 15.2M14.2 8.2L7 15.2" stroke="#e01a28" stroke-width="2.3"/></svg></div>
<div class="ic" style="left:380px;top:117px"><svg viewBox="0 0 16 16" ><path d="M2.8 14.7C2.6 11.4 4.6 9.6 7.9 9.6C11.2 9.6 13.2 11.4 13.1 14.7Z" fill="#1f54cc"/><path d="M6.6 10L7.9 12L9.2 10Z" fill="#f0a070"/><path d="M9.6 11.4L11.4 12.6" stroke="#5a84e8" stroke-width=".8"/><ellipse cx="7.8" cy="7.6" rx="2.9" ry="2.8" fill="#f8b878"/><path d="M2.9 4.4C2.6 .2 12.6 -.4 12.4 4.2L11.2 5.6H4.2Z" fill="#2460d8"/><path d="M4.4 5H11.2L11 6.2C9 5.6 6.6 5.6 4.6 6.2Z" fill="#1a1a2a"/><rect x="7.5" y="1.6" width="1.4" height="2" fill="#f4c838"/></svg></div>

<!-- group box 1 -->
<div style="left:9px;top:146px;width:799px;height:313px;border:1px solid #dcdcdc"></div>
<div style="left:15px;top:146px;width:163px;height:1px;background:#fff"></div>
<!-- inputs -->
<div class="inp" style="left:139px;top:172px;width:121px;height:23px"></div>
<div class="inp" style="left:139px;top:196px;width:297px;height:23px"></div>
<div class="inp" style="left:139px;top:223px;width:297px;height:88px;border-color:#0078d7"></div>
<div style="left:409px;top:226px;width:1px;height:15px;background:#000"></div>
<div class="inp" style="left:595px;top:172px;width:41px;height:23px"></div>
<div class="inp" style="left:635px;top:172px;width:97px;height:23px"></div>
<div class="ic" style="left:615px;top:176px"><svg viewBox="0 0 16 16" ><rect x="2" y="2" width="9.8" height="11.9" rx="1.2" fill="#b4b8e6" stroke="#767cc4" stroke-width=".9"/><path d="M3 3V12.8" stroke="#e4e6f8" stroke-width="1.2"/><path d="M3.6 2.8H11" stroke="#d6d8f2" stroke-width="1"/><circle cx="8.2" cy="8.4" r="2.9" fill="#b2e8fa" stroke="#5e6270" stroke-width="1"/><path d="M10.4 10.8L14.2 14.6" stroke="#f08a1e" stroke-width="2.2"/></svg></div>
<div class="cb" style="left:595px;top:201px"><svg width="11" height="11" viewBox="0 0 11 11" style="position:absolute;left:0;top:0"><path d="M1.5 5.3L4.2 8L9.6 2.6" stroke="#333" stroke-width="1.1" fill="none"/></svg></div>
<div class="inp" style="left:595px;top:220px;width:121px;height:23px"></div>
<div class="ic" style="left:695px;top:224px"><svg viewBox="0 0 16 16" ><rect x="2" y="2" width="9.8" height="11.9" rx="1.2" fill="#b4b8e6" stroke="#767cc4" stroke-width=".9"/><path d="M3 3V12.8" stroke="#e4e6f8" stroke-width="1.2"/><path d="M3.6 2.8H11" stroke="#d6d8f2" stroke-width="1"/><circle cx="8.2" cy="8.4" r="2.9" fill="#b2e8fa" stroke="#5e6270" stroke-width="1"/><path d="M10.4 10.8L14.2 14.6" stroke="#f08a1e" stroke-width="2.2"/></svg></div>
<div class="cb" style="left:595px;top:249px"></div>

<!-- group box 2 -->
<div style="left:11px;top:339px;width:795px;height:77px;border:1px solid #dcdcdc"></div>
<div style="left:17px;top:339px;width:574px;height:1px;background:#fff"></div>
<!-- grid -->
<div style="left:13px;top:349px;width:791px;height:66px;background:#fff;border:1px solid #9c9ea2"></div>
<div style="left:14px;top:370px;width:617px;height:1px;background:#d0d0d0"></div>
<div style="left:14px;top:390px;width:617px;height:1px;background:#e8e8e8"></div>
<div style="left:26px;top:350px;width:1px;height:40px;background:#e0e0e0"></div>
<div style="left:128px;top:350px;width:1px;height:40px;background:#e0e0e0"></div>
<div style="left:630px;top:350px;width:1px;height:40px;background:#e0e0e0"></div>
<div style="left:18px;top:375px;width:0;height:0;border-top:5.5px solid transparent;border-bottom:5.5px solid transparent;border-left:6px solid #000"></div>
<!-- navigator -->
<div class="nb" style="left:22px"><svg viewBox="0 0 16 16" ><rect x="0.9" y="0.8" width="4.1" height="14.2" fill="#0e58cf"/><rect x="2.0" y="1.9" width="1.9" height="12" fill="#2b80ea"/><rect x="2.2" y="10" width="1.5" height="3.6" fill="#6db4fa"/><path d="M13.7 2.2 L7.7 8 L13.7 13.8" fill="none" stroke="#0e58cf" stroke-width="3.8"/><path d="M13.7 2.2 L7.7 8 L13.7 13.8" fill="none" stroke="#2b80ea" stroke-width="1.1"/></svg></div>
<div class="nb" style="left:43px"><svg viewBox="0 0 16 16" ><path d="M11.6 2.3 L5.8 8 L11.6 13.7" fill="none" stroke="#0e58cf" stroke-width="4.2"/><path d="M11.6 2.3 L5.8 8 L11.6 13.7" fill="none" stroke="#2b80ea" stroke-width="1.5"/></svg></div>
<div class="nb" style="left:64px"><svg viewBox="0 0 16 16" ><path d="M4.4 2.3 L10.2 8 L4.4 13.7" fill="none" stroke="#0e58cf" stroke-width="4.2"/><path d="M4.4 2.3 L10.2 8 L4.4 13.7" fill="none" stroke="#2b80ea" stroke-width="1.5"/></svg></div>
<div class="nb" style="left:85px"><svg viewBox="0 0 16 16" ><rect x="11" y="0.8" width="4.1" height="14.2" fill="#0e58cf"/><rect x="12.1" y="1.9" width="1.9" height="12" fill="#2b80ea"/><rect x="12.3" y="10" width="1.5" height="3.6" fill="#6db4fa"/><path d="M2.3 2.2 L8.3 8 L2.3 13.8" fill="none" stroke="#0e58cf" stroke-width="3.8"/><path d="M2.3 2.2 L8.3 8 L2.3 13.8" fill="none" stroke="#2b80ea" stroke-width="1.1"/></svg></div>
<div class="nb" style="left:106px"><svg viewBox="0 0 16 16" ><path d="M6 1H10.3V5.7H15.2V10.2H10.3V15.1H6V10.2H0.8V5.7H6Z" fill="#0e58cf"/><path d="M7.2 2.2H9.1V6.9H14V9H9.1V13.9H7.2V9H2V6.9H7.2Z" fill="#2b80ea"/></svg></div>
<div class="nb" style="left:127px"><svg viewBox="0 0 16 16" ><rect x="0.9" y="4.8" width="14.2" height="6.3" fill="#0e58cf"/><rect x="1.9" y="5.8" width="12.2" height="4.3" fill="#2a82ec"/><rect x="1.9" y="5.8" width="5" height="4.3" fill="#4f9ef4"/></svg></div>
<div class="nb" style="left:148px"><svg viewBox="0 0 16 16" ><path d="M8 3.6L13.4 10.3H2.6Z" fill="#0e58cf"/><path d="M8 5.6L11.2 9.4H4.8Z" fill="#2b80ea"/></svg></div>
<div class="nb nbd" style="left:169px"><svg viewBox="0 0 16 16" ><path d="M2 7.7L6.6 11.7L13.8 3.2" fill="none" stroke="#a2a2a2" stroke-width="3.4"/></svg></div>
<div class="nb nbd" style="left:190px"><svg viewBox="0 0 16 16" ><path d="M2.2 2.6L14 13.1M14 2.6L2.2 13.1" fill="none" stroke="#a2a2a2" stroke-width="3.6"/></svg></div>
<div class="nb" style="left:211px"><svg viewBox="0 0 16 16" ><path d="M3.5 5.8C4.4 1.6 10 .8 12.4 4.6" fill="none" stroke="#2482ee" stroke-width="2.4"/><path d="M3.6 5.4C4.6 2 9.8 1.4 12.2 4.4" fill="none" stroke="#92d0ff" stroke-width="1.1"/><path d="M9.4 7.1L15.2 2.7V8.7Z" fill="#2482ee"/><path d="M11.4 6.9L14.4 4.6V7.9Z" fill="#a6e0ff"/><g transform="rotate(180 8.05 7.85)"><path d="M3.5 5.8C4.4 1.6 10 .8 12.4 4.6" fill="none" stroke="#2482ee" stroke-width="2.4"/><path d="M3.6 5.4C4.6 2 9.8 1.4 12.2 4.4" fill="none" stroke="#92d0ff" stroke-width="1.1"/><path d="M9.4 7.1L15.2 2.7V8.7Z" fill="#2482ee"/><path d="M11.4 6.9L14.4 4.6V7.9Z" fill="#a6e0ff"/></g></svg></div>

<span class="t" style="left:30.30px;top:9.34px;font-size:12px;line-height:15px;letter-spacing:-0.517px;color:#fff;">Codes</span>
<span class="t" style="left:66.10px;top:9.34px;font-size:12px;line-height:15px;letter-spacing:0.007px;color:#fff;">Maintenance</span>
<span class="t" style="left:137.60px;top:9.34px;font-size:12px;line-height:15px;letter-spacing:-0.787px;color:#fff;">@</span>
<span class="t" style="left:151.80px;top:9.34px;font-size:12px;line-height:15px;letter-spacing:-0.619px;color:#fff;">TM2019J</span>
<span class="t" style="left:201.40px;top:9.34px;font-size:12px;line-height:15px;letter-spacing:0.167px;color:#fff;">[TMWIN</span>
<span class="t" style="left:249.40px;top:9.34px;font-size:12px;line-height:15px;letter-spacing:1.600px;color:#fff;">-</span>
<span class="t" style="left:257.90px;top:9.34px;font-size:12px;line-height:15px;letter-spacing:-0.345px;color:#fff;">MULTIMODE]</span>
<span class="t" style="left:8.10px;top:34.34px;font-size:12px;line-height:15px;letter-spacing:-0.236px;color:#000;">File</span>
<span class="t" style="left:40.00px;top:34.34px;font-size:12px;line-height:15px;letter-spacing:0.331px;color:#000;">Multi-Company</span>
<span class="t" style="left:139.00px;top:34.34px;font-size:12px;line-height:15px;letter-spacing:-0.149px;color:#000;">View</span>
<span class="t" style="left:177.40px;top:34.34px;font-size:12px;line-height:15px;letter-spacing:0.117px;color:#000;">Tools</span>
<span class="t" style="left:220.00px;top:34.34px;font-size:12px;line-height:15px;letter-spacing:-0.047px;color:#000;">Help</span>
<span class="t" style="left:34.90px;top:117.34px;font-size:12px;line-height:15px;letter-spacing:-0.133px;color:#000;">Client Changes</span>
<span class="t" style="left:149.20px;top:119.34px;font-size:12px;line-height:15px;letter-spacing:-0.053px;color:#000;">Credit</span>
<span class="t" style="left:215.00px;top:119.34px;font-size:12px;line-height:15px;letter-spacing:-0.047px;color:#000;">Dispatch/Orders</span>
<span class="t" style="left:337.00px;top:119.34px;font-size:12px;line-height:15px;letter-spacing:-0.254px;color:#000;">OS&amp;D</span>
<span class="t" style="left:401.80px;top:119.34px;font-size:12px;line-height:15px;letter-spacing:-0.422px;color:#000;">Safety</span>
<span class="t" style="left:16.70px;top:140.34px;font-size:12px;line-height:15px;letter-spacing:-0.322px;color:#000;">Status</span>
<span class="t" style="left:51.70px;top:140.34px;font-size:12px;line-height:15px;letter-spacing:-0.338px;color:#000;">Codes</span>
<span class="t" style="left:88.10px;top:140.34px;font-size:12px;line-height:15px;letter-spacing:1.400px;color:#000;">-</span>
<span class="t" style="left:95.80px;top:140.34px;font-size:12px;line-height:15px;letter-spacing:-0.648px;color:#000;">Client</span>
<span class="t" style="left:125.50px;top:140.34px;font-size:12px;line-height:15px;letter-spacing:0.336px;color:#000;">Changes</span>
<span class="t" style="left:72.90px;top:177.34px;font-size:12px;line-height:15px;letter-spacing:-0.286px;color:#000;">Status Code</span>
<span class="t" style="left:44.40px;top:201.34px;font-size:12px;line-height:15px;letter-spacing:-0.038px;color:#000;">Short Description</span>
<span class="t" style="left:45.80px;top:261.34px;font-size:12px;line-height:15px;letter-spacing:-0.029px;color:#000;">Long Description</span>
<span class="t" style="left:141.60px;top:176.34px;font-size:12px;line-height:15px;letter-spacing:-0.873px;color:#000;">APPRVD</span>
<span class="t" style="left:141.60px;top:200.34px;font-size:12px;line-height:15px;letter-spacing:-1.011px;color:#000;">APPROVED</span>
<span class="t" style="left:144.50px;top:227.34px;font-size:12px;line-height:15px;letter-spacing:0.103px;color:#000;">Approved</span>
<span class="t" style="left:200.40px;top:227.34px;font-size:12px;line-height:15px;letter-spacing:0.900px;color:#000;">-</span>
<span class="t" style="left:207.90px;top:227.34px;font-size:12px;line-height:15px;letter-spacing:-0.008px;color:#000;">Change</span>
<span class="t" style="left:253.20px;top:227.34px;font-size:12px;line-height:15px;letter-spacing:-0.129px;color:#000;">applied</span>
<span class="t" style="left:293.60px;top:227.34px;font-size:12px;line-height:15px;letter-spacing:0.542px;color:#000;">to</span>
<span class="t" style="left:307.30px;top:227.34px;font-size:12px;line-height:15px;letter-spacing:-0.055px;color:#000;">actual</span>
<span class="t" style="left:342.30px;top:227.34px;font-size:12px;line-height:15px;letter-spacing:-0.086px;color:#000;">client</span>
<span class="t" style="left:373.50px;top:227.34px;font-size:12px;line-height:15px;letter-spacing:0.164px;color:#000;">record</span>
<span class="t" style="left:494.80px;top:177.34px;font-size:12px;line-height:15px;letter-spacing:-0.152px;color:#000;">Behavior Category</span>
<span class="t" style="left:485.00px;top:201.34px;font-size:12px;line-height:15px;letter-spacing:-0.040px;color:#000;">Default for Category</span>
<span class="t" style="left:467.20px;top:225.34px;font-size:12px;line-height:15px;letter-spacing:-0.275px;color:#000;">(Suggested) Next Status</span>
<span class="t" style="left:485.50px;top:249.34px;font-size:12px;line-height:15px;letter-spacing:-0.092px;color:#000;">All Users Authorized</span>
<span class="t" style="left:597.40px;top:176.34px;font-size:12px;line-height:15px;letter-spacing:1.284px;color:#000;">A</span>
<span class="t" style="left:637.70px;top:176.34px;font-size:12px;line-height:15px;letter-spacing:0.103px;color:#000;">Approved</span>
<span class="t" style="left:18.80px;top:333.34px;font-size:12px;line-height:15px;letter-spacing:-0.629px;color:#000;">Users</span>
<span class="t" style="left:49.40px;top:333.34px;font-size:12px;line-height:15px;letter-spacing:0.142px;color:#000;">Authorized</span>
<span class="t" style="left:110.60px;top:333.34px;font-size:12px;line-height:15px;letter-spacing:0.542px;color:#000;">to</span>
<span class="t" style="left:124.10px;top:333.34px;font-size:12px;line-height:15px;letter-spacing:0.374px;color:#000;">Apply</span>
<span class="t" style="left:158.80px;top:333.34px;font-size:12px;line-height:15px;letter-spacing:0.004px;color:#000;">the</span>
<span class="t" style="left:177.90px;top:333.34px;font-size:12px;line-height:15px;letter-spacing:-0.239px;color:#000;">Status</span>
<span class="t" style="left:213.00px;top:333.34px;font-size:12px;line-height:15px;letter-spacing:0.053px;color:#000;">Code</span>
<span class="t" style="left:245.50px;top:333.34px;font-size:12px;line-height:15px;letter-spacing:0.006px;color:#000;">(Only</span>
<span class="t" style="left:277.10px;top:333.34px;font-size:12px;line-height:15px;letter-spacing:0.003px;color:#000;">Applicable</span>
<span class="t" style="left:335.90px;top:333.34px;font-size:12px;line-height:15px;letter-spacing:0.200px;color:#000;">if</span>
<span class="t" style="left:345.90px;top:333.34px;font-size:12px;line-height:15px;letter-spacing:0.323px;color:#000;">"All</span>
<span class="t" style="left:367.90px;top:333.34px;font-size:12px;line-height:15px;letter-spacing:-0.709px;color:#000;">Users</span>
<span class="t" style="left:398.80px;top:333.34px;font-size:12px;line-height:15px;letter-spacing:0.187px;color:#000;">Authorized"</span>
<span class="t" style="left:465.90px;top:333.34px;font-size:12px;line-height:15px;letter-spacing:-0.786px;color:#000;">is</span>
<span class="t" style="left:476.40px;top:333.34px;font-size:12px;line-height:15px;letter-spacing:-0.581px;color:#000;">NOT</span>
<span class="t" style="left:503.30px;top:333.34px;font-size:12px;line-height:15px;letter-spacing:-0.254px;color:#000;">Checked</span>
<span class="t" style="left:551.80px;top:333.34px;font-size:12px;line-height:15px;letter-spacing:-0.122px;color:#000;">Above)</span>
<span class="t" style="left:29.60px;top:354.34px;font-size:12px;line-height:15px;letter-spacing:-0.428px;color:#000;">Type (U,G,or J)</span>
<span class="t" style="left:130.80px;top:354.34px;font-size:12px;line-height:15px;letter-spacing:-0.159px;color:#000;">User, Group, or Job Title</span>
<span class="t" style="left:29.60px;top:374.34px;font-size:12px;line-height:15px;letter-spacing:0.428px;color:#000;">U</span>
<span class="t" style="left:130.80px;top:374.34px;font-size:12px;line-height:15px;letter-spacing:-0.872px;color:#000;">SEAN</span>
<span class="t" style="left:725.90px;top:86.82px;font-size:13.5px;line-height:17px;letter-spacing:-0.239px;color:#6d6d6d;">All</span>
</div>
</body></html>
